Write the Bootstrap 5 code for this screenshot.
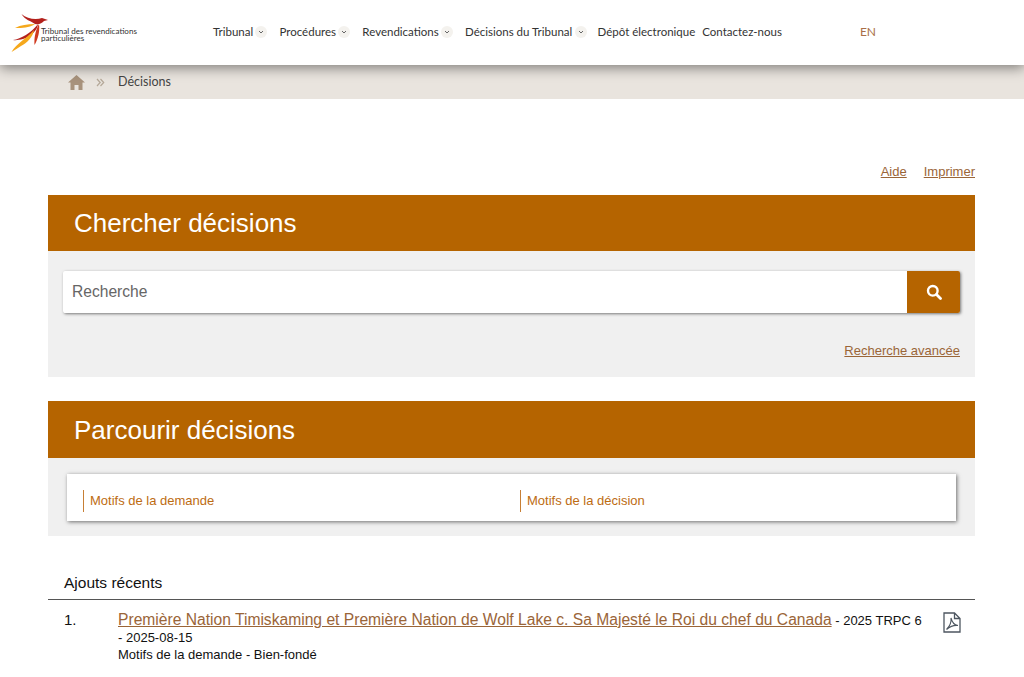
<!DOCTYPE html>
<html lang="fr">
<head>
<meta charset="utf-8">
<title>Chercher décisions</title>
<link href="https://cdn.jsdelivr.net/npm/bootstrap@5.3.0/dist/css/bootstrap.min.css" rel="stylesheet">
<style>
html,body{height:677px;overflow:hidden}
body{font-family:"Liberation Sans",Arial,sans-serif;font-size:13px;color:#222;background:#fff}
a{color:#9a6538}
.site-head{height:65px;background:#fff;box-shadow:0 3px 12px rgba(0,0,0,.45);position:relative;z-index:2;padding-left:11px}
.logo-box{width:202px;height:65px;padding-top:13px}
.logo-txt{font-family:Lato,sans-serif;font-size:8.050px;line-height:6.500px;color:#333;margin-left:-10px;padding-top:15px}
.site-nav{font-family:Lato,sans-serif;font-size:11.500px;color:#333;gap:8px;padding-bottom:1px}
.nav-entry{color:#333;text-decoration:none;white-space:nowrap}
.nav-tight{margin-left:-1px}
.chev{width:12px;height:12px;border-radius:50%;background:#f4f2ee;margin-left:2.300px;margin-right:4px}
.lang-link{font-family:Lato,sans-serif;font-size:12px;color:#a96f48;text-decoration:none;margin-left:70px}
.crumbs{height:34px;background:#e9e4de;padding-left:68px;font-family:Lato,sans-serif;font-size:12.500px;color:#444}
.crumb-sep{margin:0 13px 0 11px}
.page-wrap{margin:0 49px 0 48px}
.tools{padding-top:64px;height:96px;gap:17px;font-size:13px;line-height:18px}
.panel-title{background:#b56400;color:#fff;font-size:26px;font-weight:400;margin:0;padding-left:26px}
.t-one{height:56px;line-height:56px}
.t-two{height:57px;line-height:58px}
.search-panel{background:#f0f0f0;height:126px;padding:20px 15px 0 15px;margin-bottom:24px}
.search-bar{height:42px;box-shadow:1px 1px 3px rgba(0,0,0,.5);background:#fff;border-radius:2px}
.search-field{flex:1;border:0;outline:0;font-size:15.600px;padding:0 9px;color:#555;background:transparent;font-family:inherit;min-width:0}
.search-field::placeholder{color:#666;opacity:1}
.search-go{width:53px;background:#b56400;border:0;border-radius:0 2px 2px 0;padding:0}
.adv{margin-top:30px;text-align:right;font-size:13px;line-height:16px}
.browse-panel{background:#f0f0f0;height:78px;padding:16px 19px 0 19px;margin-bottom:38px}
.browse-box{height:47px;background:#fff;box-shadow:1px 1px 4px rgba(0,0,0,.55);padding:16px 16px 0}
.browse-col{width:437px;flex-shrink:0;border-left:1px solid #c77f35;padding-left:6px;font-size:13px;line-height:22px;height:22px;color:#bd6c12}
.recent-head{font-size:15.500px;line-height:18px;color:#111;padding:0 0 7px 16px;border-bottom:1px solid #555}
.rec-row{padding-top:11px}
.rec-num{width:70px;padding-left:16px;font-size:15px;line-height:18px;color:#111}
.rec-body{width:808px;font-size:13px;line-height:17px;color:#111}
.rec-body a{font-size:15.630px}
.rec-pdf{padding:1px 0 0 17px}
</style>
</head>
<body>
<header class="site-head d-flex align-items-center">
  <div class="logo-box d-flex align-items-start flex-shrink-0">
    <svg width="40" height="40" viewBox="0 0 40 40" class="flex-shrink-0">
      <path d="M10.500 1C14 7 20 8 24 11C28 12 31 10 33 8L37 7L31 5C25 7 16 6 10.500 1Z" fill="#b3211c"/>
      <path d="M4 15C10 12 16 11 24 11C20 14 12 15.500 4 15Z" fill="#f5a81c"/>
      <path d="M2 27C10 26 20 20 27 11C27 16 20 24 12 26C8 27 5 27.500 2 27Z" fill="#b3211c"/>
      <path d="M28 11C29 18 27 26 23.500 32C23 26 24 18 28 11Z" fill="#d0391f"/>
      <path d="M0.500 39C6 30 15 26 23 17C22 24 16 30 10 33C7 35 4 37 0.500 39Z" fill="#f5a81c"/>
    </svg>
    <div class="logo-txt">Tribunal des revendications<br>particulières</div>
  </div>
  <nav class="site-nav d-flex align-items-center">
    <span class="d-flex align-items-center"><a class="nav-entry" href="#">Tribunal</a><svg class="chev" viewBox="0 0 12 12"><path d="M4 5l2 2 2-2" fill="none" stroke="#666" stroke-width="1"/></svg></span>
    <span class="d-flex align-items-center"><a class="nav-entry" href="#">Procédures</a><svg class="chev" viewBox="0 0 12 12"><path d="M4 5l2 2 2-2" fill="none" stroke="#666" stroke-width="1"/></svg></span>
    <span class="d-flex align-items-center"><a class="nav-entry" href="#">Revendications</a><svg class="chev" viewBox="0 0 12 12"><path d="M4 5l2 2 2-2" fill="none" stroke="#666" stroke-width="1"/></svg></span>
    <span class="d-flex align-items-center"><a class="nav-entry" href="#">Décisions du Tribunal</a><svg class="chev" viewBox="0 0 12 12"><path d="M4 5l2 2 2-2" fill="none" stroke="#666" stroke-width="1"/></svg></span>
    <a class="nav-entry nav-tight" href="#">Dépôt électronique</a>
    <a class="nav-entry nav-tight" href="#">Contactez-nous</a>
    <a class="lang-link" href="#">EN</a>
  </nav>
</header>
<div class="crumbs d-flex align-items-center">
  <svg width="17" height="15" viewBox="0 0 17 15"><path d="M8.500 0L17 7.500H14.500V15H10.500V10H6.500V15H2.500V7.500H0Z" fill="#a8927c"/></svg>
  <svg class="crumb-sep" width="9" height="9" viewBox="0 0 9 9"><path d="M1 1l3.200 3.500L1 8M4.500 1l3.200 3.500L4.500 8" fill="none" stroke="#b5a898" stroke-width="1.200"/></svg>
  <span>Décisions</span>
</div>
<main class="page-wrap">
  <div class="tools d-flex justify-content-end"><a href="#">Aide</a><a href="#">Imprimer</a></div>
  <h1 class="panel-title t-one">Chercher décisions</h1>
  <section class="search-panel">
    <div class="search-bar d-flex">
      <input class="search-field" type="text" placeholder="Recherche" aria-label="Recherche">
      <button class="search-go d-flex align-items-center justify-content-center" type="button" aria-label="Recherche">
        <svg width="16" height="16" viewBox="0 0 16 16"><circle cx="6.800" cy="6.800" r="4.800" fill="none" stroke="#fff" stroke-width="2.400"/><path d="M10.500 10.500L14.500 14.500" stroke="#fff" stroke-width="2.800" stroke-linecap="round"/></svg>
      </button>
    </div>
    <div class="adv"><a href="#">Recherche avancée</a></div>
  </section>
  <h2 class="panel-title t-two">Parcourir décisions</h2>
  <section class="browse-panel">
    <div class="browse-box d-flex">
      <div class="browse-col">Motifs de la demande</div>
      <div class="browse-col">Motifs de la décision</div>
    </div>
  </section>
  <div class="recent-head">Ajouts récents</div>
  <div class="rec-row d-flex">
    <div class="rec-num">1.</div>
    <div class="rec-body">
      <a href="#">Première Nation Timiskaming et Première Nation de Wolf Lake c. Sa Majesté le Roi du chef du Canada</a> - 2025 TRPC 6 - 2025-08-15<br>
      Motifs de la demande - Bien-fondé
    </div>
    <div class="rec-pdf">
      <svg width="18" height="21" viewBox="0 0 18 21"><path d="M1 1H11.500L17 6.500V20H1Z M11.500 1V6.500H17" fill="none" stroke="#4d5660" stroke-width="1.300"/><path d="M8 6C8.500 10 7 14 3.500 17.500C7 14.500 11 13 15 13.500C11 13 9 10 8 6Z" fill="none" stroke="#4d5660" stroke-width="1.100"/></svg>
    </div>
  </div>
</main>
<script src="https://cdn.jsdelivr.net/npm/bootstrap@5.3.0/dist/js/bootstrap.bundle.min.js"></script>
</body>
</html>
